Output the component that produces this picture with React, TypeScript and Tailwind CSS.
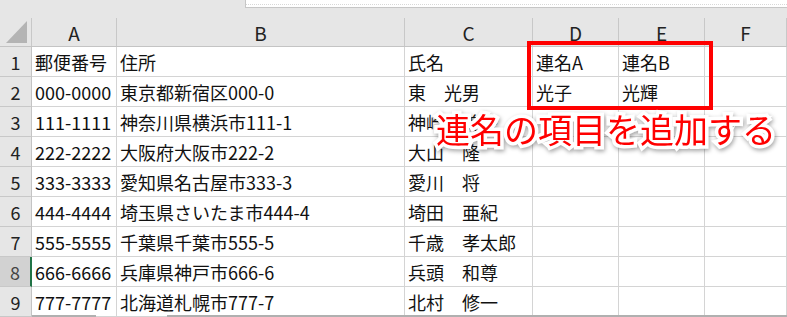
import React from "react";

const cols = ["A", "B", "C", "D", "E", "F"];
const rows: string[][] = [
  ["郵便番号", "住所", "氏名", "連名A", "連名B", ""],
  ["000-0000", "東京都新宿区000-0", "東　光男", "光子", "光輝", ""],
  ["111-1111", "神奈川県横浜市111-1", "神崎　美香", "", "", ""],
  ["222-2222", "大阪府大阪市222-2", "大山　隆", "", "", ""],
  ["333-3333", "愛知県名古屋市333-3", "愛川　将", "", "", ""],
  ["444-4444", "埼玉県さいたま市444-4", "埼田　亜紀", "", "", ""],
  ["555-5555", "千葉県千葉市555-5", "千歳　孝太郎", "", "", ""],
  ["666-6666", "兵庫県神戸市666-6", "兵頭　和尊", "", "", ""],
  ["777-7777", "北海道札幌市777-7", "北村　修一", "", "", ""],
];

const font = "font-['Noto_Sans_CJK_JP','Noto_Sans',sans-serif]";

export default function App() {
  return (
    <div className={`relative w-[787px] h-[317px] overflow-hidden bg-white ${font}`}>
      {/* top strip */}
      <div className="h-[18px] bg-[#e6e6e6] flex">
        <div className="w-[245px]" />
        <div className="flex-1 h-[8px] bg-white border-l border-b border-[#c6c6c6]">
          <div className="mt-[4px] border-b border-dotted border-[#d8d8d8]" />
        </div>
      </div>
      {/* header row */}
      <div className="grid grid-cols-[32px_85px_288px_128px_86px_86px_82px] h-[29px] bg-[#e6e6e6] border-b border-[#c4c4c4]">
        <div className="border-r border-[#c8c8c8] relative">
          <svg width="32" height="28" className="absolute left-0 top-0">
            <polygon points="27,3 27,25 6,25" fill="#b4b4b4" />
          </svg>
        </div>
        {cols.map((c) => (
          <div
            key={c}
            className="border-r border-[#c8c8c8] flex items-center justify-center text-[19px] text-[#222] leading-none pt-[1px]"
          >
            {c}
          </div>
        ))}
      </div>
      {rows.map((r, i) => {
        const sel = i === 7;
        return (
          <div
            key={i}
            className="grid grid-cols-[32px_85px_288px_128px_86px_86px_82px] h-[30px]"
          >
            <div
              className={
                sel
                  ? "bg-[#d2d2d2] border-r-2 border-r-[#217346] border-b border-b-[#c8c8c8] flex items-center justify-center text-[18px] text-[#444] leading-none"
                  : "bg-[#e6e6e6] border-r border-r-[#c4c4c4] border-b border-b-[#c8c8c8] flex items-center justify-center text-[18px] text-[#222] leading-none"
              }
            >
              {i + 1}
            </div>
            {r.map((t, j) => (
              <div
                key={j}
                className="border-r border-b border-[#d4d4d4] flex items-center pl-[3px] text-[18px] text-[#111] leading-none whitespace-nowrap overflow-visible"
              >
                {t}
              </div>
            ))}
          </div>
        );
      })}
      {/* bottom scroll line */}
      <div className="absolute left-[32px] bottom-0 w-[64px] h-[2px] bg-[#b0b0b0]" />
      <div className="absolute left-[167px] bottom-0 right-0 h-[2px] bg-[#b0b0b0]" />
      {/* red highlight box */}
      <div className="absolute left-[527px] top-[41px] w-[186px] h-[69px] border-[4px] border-[#ff0000]" />
      {/* annotation */}
      <div className="absolute left-[436px] top-[107px] text-[34px] leading-[44px] text-[#ff0000] whitespace-nowrap [paint-order:stroke_fill] [-webkit-text-stroke:7px_white] drop-shadow-[1px_2px_2px_rgba(0,0,0,0.35)]">
        連名の項目を追加する
      </div>
    </div>
  );
}
